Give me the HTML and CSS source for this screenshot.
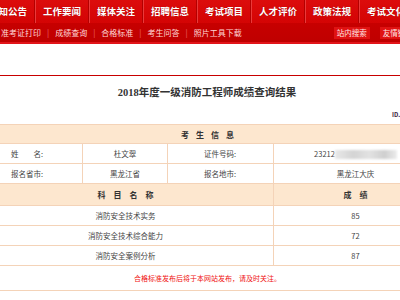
FILE: index.html
```html
<html lang="zh-CN">

<head>
    <meta charset="utf-8" />
    <title>成绩查询结果</title>

    <link rel="stylesheet" href="styles.css">
</head>

<body>

<div class="topnav">
    <ul class="mainmenu">
        <li>通知公告</li>
        <li>工作要闻</li>
        <li>媒体关注</li>
        <li>招聘信息</li>
        <li>考试项目</li>
        <li>人才评价</li>
        <li>政策法规</li>
        <li>考试文化</li>
    </ul>
    <div class="subbar">
        <div class="sublinks">
            <a>准考证打印</a><span class="sep">|</span>
            <a>成绩查询</a><span class="sep">|</span>
            <a>合格标准</a><span class="sep">|</span>
            <a>考生问答</a><span class="sep">|</span>
            <a>照片工具下载</a>
        </div>
        <div class="tools">
            <a>站内搜索</a>
            <a>友情链接</a>
        </div>
    </div>
</div>

<div class="page">
    <div class="rule"></div>

    <h1 class="title">2018年度一级消防工程师成绩查询结果</h1>
    <div class="printinfo">ID.</div>

    <table class="result">
        <colgroup>
            <col class="c1">
            <col class="c2">
            <col class="c3">
            <col class="c4">
        </colgroup>
        <tr class="head">
            <td colspan="4"><span class="spaced">考生信息</span></td>
        </tr>
        <tr>
            <td class="label">姓　　名:</td>
            <td class="value">杜文翠</td>
            <td class="label label2">证件号码:</td>
            <td class="value">23212<span class="blur"></span></td>
        </tr>
        <tr>
            <td class="label">报名省市:</td>
            <td class="value">黑龙江省</td>
            <td class="label label2">报名地市:</td>
            <td class="value">黑龙江大庆</td>
        </tr>
        <tr class="head head2">
            <td colspan="3"><span class="spaced wide">科目名称</span></td>
            <td><span class="spaced wide">成绩</span></td>
        </tr>
        <tr>
            <td colspan="3" class="value">消防安全技术实务</td>
            <td class="value">85</td>
        </tr>
        <tr>
            <td colspan="3" class="value">消防安全技术综合能力</td>
            <td class="value">72</td>
        </tr>
        <tr>
            <td colspan="3" class="value">消防安全案例分析</td>
            <td class="value">87</td>
        </tr>
        <tr class="foot">
            <td colspan="4">合格标准发布后将于本网站发布，请及时关注。</td>
        </tr>
    </table>
</div>

</body>
</html>
```

FILE: styles.css
```css
body {
    margin: 0;
    overflow: hidden;
    background: white;
    font-family: "Noto Sans CJK SC", "Liberation Sans", sans-serif;
}

/* barre de navigation rouge */
div.topnav {
    width: 100%;
}

ul.mainmenu {
    display: flex;
    margin: 0 0 0 -18px;
    padding: 0;
    list-style: none;
    height: 23px;
    background: linear-gradient(#dc0c0c, #d40404);
    white-space: nowrap;
}

ul.mainmenu li {
    padding: 0 7px;
    font-size: 9.5px;
    line-height: 23px;
    font-weight: bold;
    color: white;
    text-shadow: 0 0 1px #900;
    border-right: 1px solid #b30000;
    box-shadow: 1px 0 0 #ea3a3a;
    margin-right: 1px;
}

div.subbar {
    display: flex;
    align-items: center;
    height: 19px;
    background: linear-gradient(#c70000, #bf0000);
    border-bottom: 2px solid #e2141a;
    white-space: nowrap;
}

div.sublinks {
    display: flex;
    align-items: center;
    margin-left: -5px;
    font-size: 8px;
    color: #ffd6d6;
}

div.sublinks a {
    padding: 0 6px;
}

div.sublinks span.sep {
    color: #e66;
    font-size: 8px;
}

div.tools {
    display: flex;
    gap: 10px;
    margin-left: 86px;
}

div.tools a {
    display: block;
    padding: 0 3px;
    height: 12px;
    line-height: 12px;
    font-size: 7.5px;
    color: #ffe8e8;
    background: #e01212;
}

/* contenu */
div.page {
    width: 460px;
    margin-left: -23px;
}

div.rule {
    margin-top: 31px;
    height: 1px;
    background: #c80000;
}

h1.title {
    margin: 0;
    padding-top: 10px;
    height: 14px;
    line-height: 14px;
    font-size: 10.5px;
    font-weight: bold;
    text-align: center;
    color: #333;
    font-family: "Liberation Serif", "Noto Sans CJK SC", serif;
}

div.printinfo {
    margin-top: 11px;
    padding-left: 415px;
    height: 8px;
    line-height: 8px;
    font-size: 6px;
    font-weight: bold;
    color: #402040;
}

table.result {
    margin-top: 5px;
    width: 460px;
    border-collapse: collapse;
    table-layout: fixed;
    font-size: 7.5px;
    color: #444;
}

table.result col.c1 { width: 105px; }
table.result col.c2 { width: 85px; }
table.result col.c3 { width: 106px; }
table.result col.c4 { width: 164px; }

table.result td {
    border: 1px solid #f4d3b8;
    padding: 0;
    height: 20px;
    text-align: center;
    white-space: nowrap;
}

table.result tr.head td {
    height: 19px;
    background: #fde7cf;
    font-weight: bold;
    font-size: 8px;
    color: #333;
}

table.result tr.head2 td {
    height: 22px;
}

table.result td.label {
    text-align: left;
    padding-left: 33px;
}

table.result td.label2 {
    padding-left: 36px;
}

span.spaced {
    letter-spacing: 7px;
    padding-left: 7px;
}

span.spaced.wide {
    letter-spacing: 8px;
    padding-left: 8px;
}

span.blur {
    display: inline-block;
    vertical-align: middle;
    width: 62px;
    height: 9px;
    background: linear-gradient(90deg, #e8e8e8, #d4d4d4 30%, #e2e2e2 55%, #cfcfcf 80%, #ececec);
    filter: blur(1px);
}

table.result tr.foot td {
    height: 25px;
    font-size: 7px;
    color: #f01010;
}
```
